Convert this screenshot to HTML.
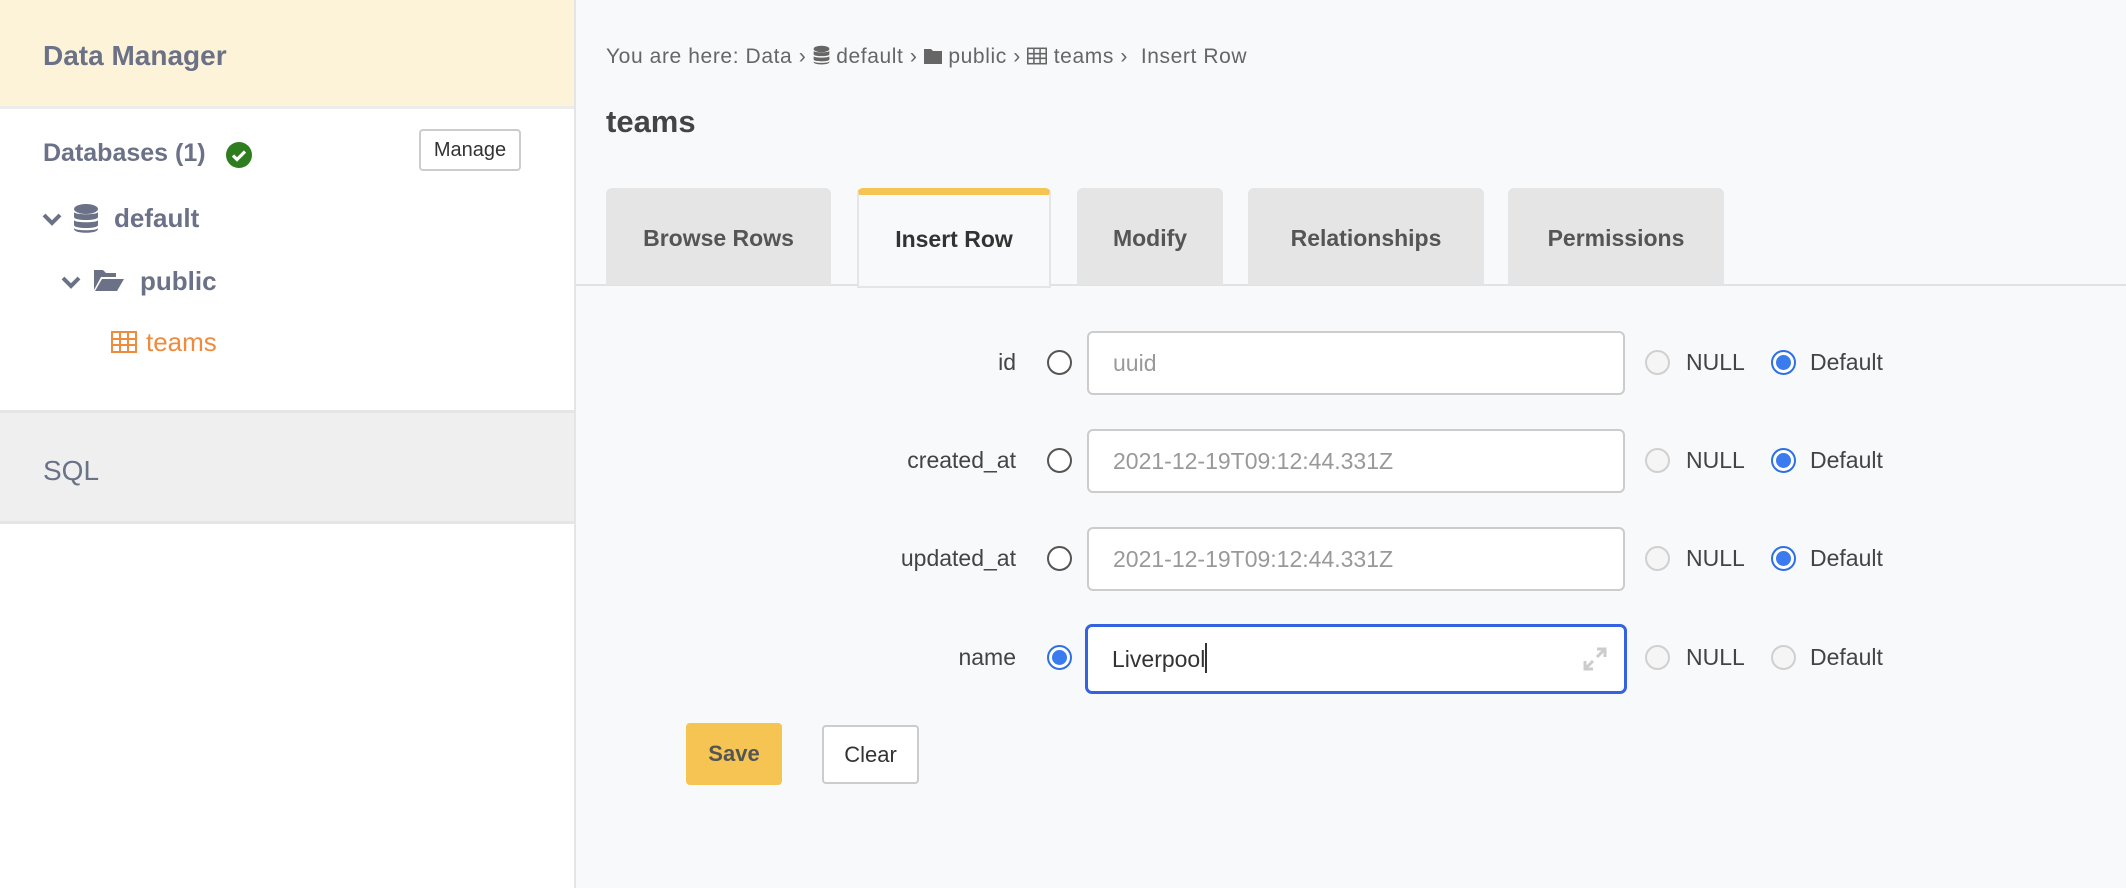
<!DOCTYPE html>
<html><head><meta charset="utf-8"><style>
*{box-sizing:border-box;margin:0;padding:0}
body{width:2126px;height:888px;overflow:hidden;background:#f8f9fa;font-family:"Liberation Sans",sans-serif;position:relative;color:#444}
.a{position:absolute;white-space:nowrap}
#side{position:absolute;left:0;top:0;width:576px;height:888px;background:#fff;border-right:2px solid #e5e5e5}
.radio{position:absolute;width:25px;height:25px;border-radius:50%;border:2px solid #555;background:#fff}
.radio.dis{border-color:#d0d0d0;background:#f5f5f5}
.radio.on{border:2px solid #2f6fe6;background:#fff}
.radio.on::after{content:"";position:absolute;left:3px;top:3px;width:15px;height:15px;border-radius:50%;background:#3b7bf0}
.inp{position:absolute;left:1087px;width:538px;height:64px;border:2px solid #ccc;border-radius:6px;background:#fff;font-size:23px;color:#999;padding-left:24px;line-height:60px}
.lbl{position:absolute;right:1110px;font-size:23px;color:#444}
.tab{position:absolute;top:188px;height:97px;background:#e5e5e5;border-radius:6px 6px 0 0;font-weight:bold;font-size:23px;color:#555;text-align:center;line-height:100px}
.opt{position:absolute;font-size:23px;color:#444}
</style></head><body>
<div id="side">
 <div class="a" style="left:0;top:0;width:574px;height:109px;background:#fdf3d9;border-bottom:3px solid #ececec"></div>
 <div class="a" style="left:43px;top:40px;font-size:28px;font-weight:bold;color:#6b7187">Data Manager</div>
 <div class="a" style="left:43px;top:139px;font-size:25px;font-weight:bold;color:#6b7187">Databases (1)</div>
 <svg class="a" style="left:226px;top:142px" width="26" height="26" viewBox="0 0 26 26"><circle cx="13" cy="13" r="13" fill="#2e7d1f"/><path d="M7 13.5l4 4 8-8" stroke="#fff" stroke-width="3.2" fill="none"/></svg>
 <div class="a" style="left:419px;top:129px;width:102px;height:42px;border:2px solid #ccc;border-radius:4px;font-size:20px;color:#333;text-align:center;line-height:38px">Manage</div>
 <svg class="a" style="left:42px;top:212px" width="20" height="14" viewBox="0 0 20 14"><path d="M2 3l8 8 8-8" stroke="#6b7187" stroke-width="4" fill="none"/></svg>
 <svg class="a" style="left:73px;top:204px" width="26" height="30" viewBox="0 0 26 30"><ellipse cx="13" cy="5" rx="12" ry="5" fill="#6b7187"/><path d="M1 8c0 3 24 3 24 0v5c0 4-24 4-24 0z M1 16c0 3 24 3 24 0v5c0 4-24 4-24 0z M1 24c0 3 24 3 24 0v1c0 5-24 5-24 0z" fill="#6b7187"/></svg>
 <div class="a" style="left:114px;top:203px;font-size:26px;font-weight:bold;color:#6b7187">default</div>
 <svg class="a" style="left:61px;top:275px" width="20" height="14" viewBox="0 0 20 14"><path d="M2 3l8 8 8-8" stroke="#6b7187" stroke-width="4" fill="none"/></svg>
 <svg class="a" style="left:94px;top:268px" width="30" height="24" viewBox="0 0 30 24"><path d="M0 2h9l3 3h10v4H7L0 22z M8 11h22l-7 12H1z" fill="#6b7187"/></svg>
 <div class="a" style="left:140px;top:266px;font-size:26px;font-weight:bold;color:#6b7187">public</div>
 <svg class="a" style="left:111px;top:331px" width="26" height="22" viewBox="0 0 26 22"><rect x="1" y="1" width="24" height="20" fill="none" stroke="#ef8b3c" stroke-width="2"/><path d="M1 8h24M1 14h24M9 1v20M17 1v20" stroke="#ef8b3c" stroke-width="2"/></svg>
 <div class="a" style="left:146px;top:327px;font-size:26px;color:#ef8b3c">teams</div>
 <div class="a" style="left:0;top:410px;width:574px;height:114px;background:#efefef;border-top:3px solid #e5e5e5;border-bottom:3px solid #e5e5e5"></div>
 <div class="a" style="left:43px;top:455px;font-size:28px;color:#6b7187">SQL</div>
</div>

<div class="a" style="left:606px;top:45px;font-size:21px;letter-spacing:0.6px;color:#666">You are here: Data › <svg width="17" height="21" viewBox="0 0 26 30" style="vertical-align:-3px"><ellipse cx="13" cy="5" rx="12" ry="5" fill="#666"/><path d="M1 8c0 3 24 3 24 0v5c0 4-24 4-24 0z M1 16c0 3 24 3 24 0v5c0 4-24 4-24 0z M1 24c0 3 24 3 24 0v1c0 5-24 5-24 0z" fill="#666"/></svg> default › <svg width="18" height="18" viewBox="0 0 18 16" style="vertical-align:-2px"><path d="M0 1h7l2 2h9v13H0z" fill="#666"/></svg> public › <svg width="20" height="18" viewBox="0 0 26 22" style="vertical-align:-2px"><rect x="1" y="1" width="24" height="20" fill="none" stroke="#666" stroke-width="2"/><path d="M1 8h24M1 14h24M9 1v20M17 1v20" stroke="#666" stroke-width="2"/></svg> teams ›&nbsp; Insert Row</div>
<div class="a" style="left:606px;top:104px;font-size:31px;font-weight:bold;color:#444">teams</div>

<div class="a" style="left:576px;top:284px;width:1550px;height:2px;background:#e2e2e2"></div>
<div class="tab" style="left:606px;width:225px">Browse Rows</div>
<div class="tab" style="left:857px;width:194px;height:100px;background:#f8f9fa;border:2px solid #e5e5e5;border-top:7px solid #f5c452;color:#333;line-height:88px">Insert Row</div>
<div class="tab" style="left:1077px;width:146px">Modify</div>
<div class="tab" style="left:1248px;width:236px">Relationships</div>
<div class="tab" style="left:1508px;width:216px">Permissions</div>

<div class="lbl" style="top:349px">id</div>
<div class="radio" style="left:1047px;top:350px"></div>
<div class="inp" style="top:331px">uuid</div>
<div class="radio dis" style="left:1645px;top:350px"></div><div class="opt" style="left:1686px;top:349px">NULL</div>
<div class="radio on" style="left:1771px;top:350px"></div><div class="opt" style="left:1810px;top:349px">Default</div>

<div class="lbl" style="top:447px">created_at</div>
<div class="radio" style="left:1047px;top:448px"></div>
<div class="inp" style="top:429px">2021-12-19T09:12:44.331Z</div>
<div class="radio dis" style="left:1645px;top:448px"></div><div class="opt" style="left:1686px;top:447px">NULL</div>
<div class="radio on" style="left:1771px;top:448px"></div><div class="opt" style="left:1810px;top:447px">Default</div>

<div class="lbl" style="top:545px">updated_at</div>
<div class="radio" style="left:1047px;top:546px"></div>
<div class="inp" style="top:527px">2021-12-19T09:12:44.331Z</div>
<div class="radio dis" style="left:1645px;top:546px"></div><div class="opt" style="left:1686px;top:545px">NULL</div>
<div class="radio on" style="left:1771px;top:546px"></div><div class="opt" style="left:1810px;top:545px">Default</div>

<div class="lbl" style="top:644px">name</div>
<div class="radio on" style="left:1047px;top:645px"></div>
<div class="inp" style="top:624px;left:1085px;width:542px;height:70px;border:3px solid #3462e0;border-radius:7px;color:#333;line-height:64px">Liverpool<span style="display:inline-block;width:2px;height:30px;background:#333;vertical-align:-6px"></span></div>
<svg class="a" style="left:1583px;top:647px" width="24" height="24" viewBox="0 0 24 24"><path d="M14 2h8v8M22 2l-8 8M10 22H2v-8M2 22l8-8" stroke="#ccc" stroke-width="3" fill="none"/></svg>
<div class="radio dis" style="left:1645px;top:645px"></div><div class="opt" style="left:1686px;top:644px">NULL</div>
<div class="radio dis" style="left:1771px;top:645px"></div><div class="opt" style="left:1810px;top:644px">Default</div>

<div class="a" style="left:686px;top:723px;width:96px;height:62px;background:#f5c452;border-radius:4px;font-size:22px;font-weight:bold;color:#555;text-align:center;line-height:62px">Save</div>
<div class="a" style="left:822px;top:725px;width:97px;height:59px;background:#fff;border:2px solid #ccc;border-radius:4px;font-size:22px;color:#333;text-align:center;line-height:55px">Clear</div>
</body></html>
